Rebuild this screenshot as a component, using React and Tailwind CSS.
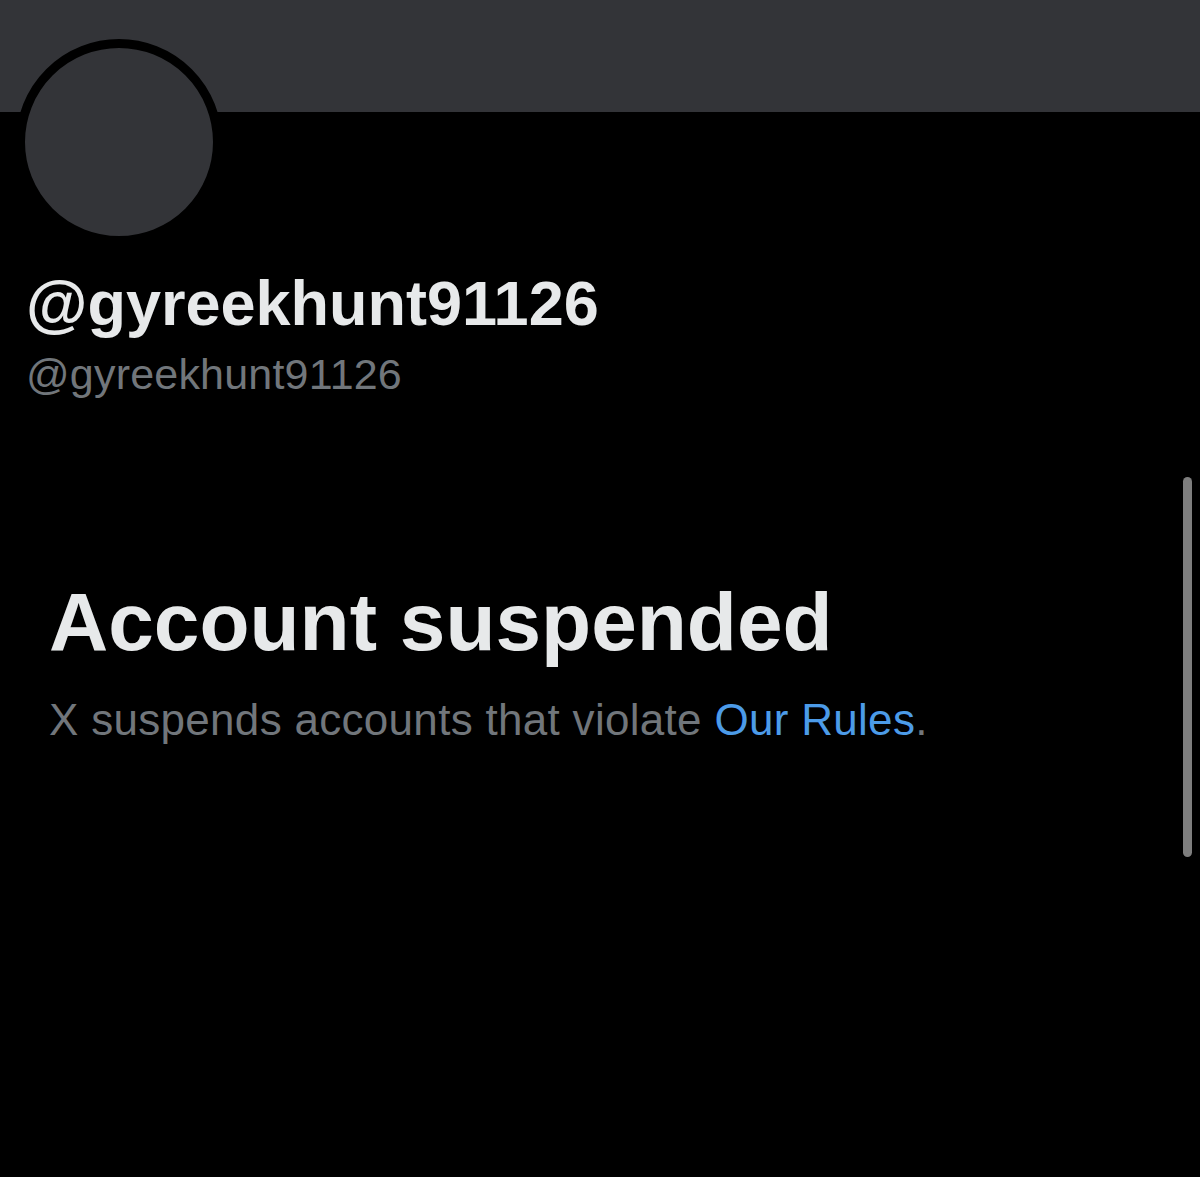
const font = { fontFamily: '"Liberation Sans", Arial, sans-serif' };

export default function App() {
  return (
    <div className="relative min-h-[1177px] w-full bg-black overflow-hidden" style={font}>
      <div className="h-[112px] bg-[#333438]" />

      <div className="-mt-[73px] ml-[16px] w-[206px] h-[206px] rounded-full border-[9px] border-black bg-[#333438]" />

      <div className="pl-[26px] mt-[27px]">
        <h1 className="text-[63px] leading-none font-bold text-[#e7e9ea]">
          @gyreekhunt91126
        </h1>
        <p className="mt-[18px] text-[43px] leading-none text-[#71767b] tracking-[0.2px]">
          @gyreekhunt91126
        </p>
      </div>

      <div className="pl-[49px] mt-[185px]">
        <h2 className="text-[82px] leading-none font-bold text-[#e7e9ea]">
          Account suspended
        </h2>
        <p className="mt-[35px] text-[44px] leading-none text-[#71767b] tracking-[0.3px]">
          X suspends accounts that violate{" "}
          <span className="text-[#4c9be8]">Our Rules</span>.
        </p>
      </div>

      {/* scroll indicator */}
      <div className="absolute left-[1183px] top-[477px] w-[9px] h-[380px] rounded-full bg-[#7e7e7e]" />
    </div>
  );
}
